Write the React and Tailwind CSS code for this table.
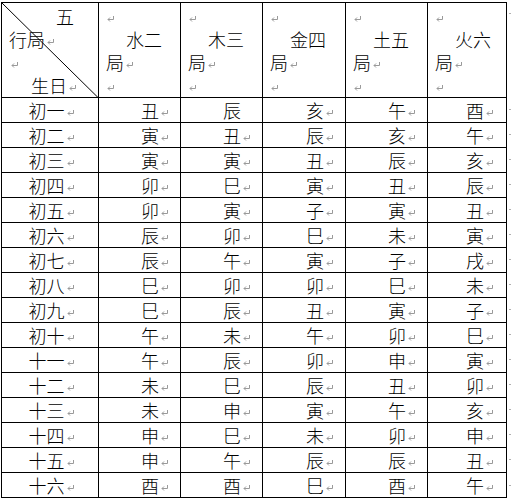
import React from "react";

const Mark = ({ hidden = false }) => (
  <svg
    width="7"
    height="6"
    viewBox="0 0 7 6"
    className={"ml-[2px] mt-[6px] shrink-0 " + (hidden ? "invisible" : "")}
  >
    <path d="M6.5 0 V3.5 H1" stroke="#9a9a9a" strokeWidth="1" fill="none" />
    <path d="M3 1.5 L1 3.5 L3 5.5" stroke="#9a9a9a" strokeWidth="1" fill="none" />
  </svg>
);

const labels = [
  "初一", "初二", "初三", "初四", "初五", "初六", "初七", "初八",
  "初九", "初十", "十一", "十二", "十三", "十四", "十五", "十六",
];

const cols = [
  "丑寅寅卯卯辰辰巳巳午午未未申申酉",
  "辰丑寅巳寅卯午卯辰未辰巳申巳午酉",
  "亥辰丑寅子巳寅卯丑午卯辰寅未辰巳",
  "午亥辰丑寅未子巳寅卯申丑午卯辰酉",
  "酉午亥辰丑寅戌未子巳寅卯亥申丑午",
];

const heads = [
  ["水二", "局"],
  ["木三", "局"],
  ["金四", "局"],
  ["土五", "局"],
  ["火六", "局"],
];

const font = { fontFamily: '"Noto Sans CJK SC", "Noto Sans", sans-serif' };

function Line({ children, pl }) {
  return (
    <div className={"flex h-[23px] items-center leading-none " + pl}>{children}</div>
  );
}

export default function App() {
  return (
    <div className="w-[511px] h-[499px] bg-white overflow-hidden text-black font-light" style={font}>
      <div className="ml-px mt-[2px] grid grid-cols-[97px_82px_82px_83px_82px_80px_4px] text-[18px]">
        {/* header */}
        <div className="relative h-[95px] border-l border-t border-black pt-px">
          <svg
            className="absolute left-[-1px] top-[-1px]"
            width="98"
            height="96"
            viewBox="0 0 98 96"
          >
            <line x1="0.5" y1="0.5" x2="97" y2="95.5" stroke="#000" strokeWidth="1" />
          </svg>
          <Line pl="pl-[54px]">五</Line>
          <Line pl="pl-[7px]">
            行局<Mark />
          </Line>
          <Line pl="pl-[7px]">
            <Mark />
          </Line>
          <Line pl="pl-[29px]">
            生日<Mark />
          </Line>
        </div>
        {heads.map(([a, b], i) => (
          <div
            key={i}
            className={
              "h-[95px] border-l border-t border-black pt-px " +
              (i === 4 ? "border-r" : "")
            }
          >
            <Line pl="pl-[6px]">
              <Mark />
            </Line>
            <Line pl="pl-[27px]">{a}</Line>
            <Line pl="pl-[7px]">
              {b}
              <Mark />
            </Line>
            <Line pl="pl-[6px]">
              <Mark />
            </Line>
          </div>
        ))}
        <div className="flex h-[95px] items-start pt-[11px]">
          <div className="ml-[2px] h-px w-[2px] bg-[#b0b0b0]" />
        </div>

        {/* body */}
        {labels.map((lab, r) => {
          const last = r === labels.length - 1;
          const h = last ? "h-[26px] border-b" : "h-[25px]";
          return (
            <React.Fragment key={r}>
              <div
                className={
                  "flex items-center justify-center border-l border-t border-black leading-none pl-[2px] " +
                  h
                }
              >
                {lab}
                <Mark />
              </div>
              {cols.map((c, i) => (
                <div
                  key={i}
                  className={
                    "flex items-center justify-end border-l border-t border-black leading-none pr-[12px] " +
                    h +
                    (i === 4 ? " border-r pr-[13px]" : "")
                  }
                >
                  {c[r]}
                  <Mark hidden={r === 0 && i === 1} />
                </div>
              ))}
              <div className={"flex items-center " + (last ? "h-[26px]" : "h-[25px]")}>
                <div className="ml-[2px] h-px w-[2px] bg-[#b0b0b0]" />
              </div>
            </React.Fragment>
          );
        })}
      </div>
    </div>
  );
}
